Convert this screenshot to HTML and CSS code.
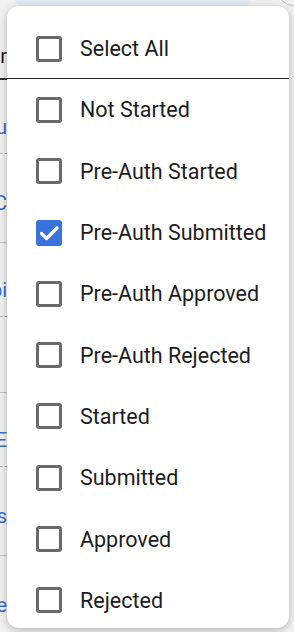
FILE: index.html
```html
<!DOCTYPE html>
<html lang="en">
<head>
    <meta charset="UTF-8">
    <meta name="viewport" content="width=device-width, initial-scale=1.0">
    <title>Status filter</title>
    <link rel="stylesheet" href="styles.css">
</head>
<body>
    <div class="page">
        <div class="top_bar">
            <span class="search_pill"></span>
            <span class="round_btn"></span>
        </div>
        <div class="table">
            <div class="head"><span class="cell">Order</span></div>
            <div class="group">
                <div class="line"><span class="cell link">Lu</span></div>
                <div class="line"><span class="cell link">RC</span></div>
            </div>
            <div class="group tall">
                <div class="line"><span class="cell link">Api</span></div>
                <div class="line empty"></div>
            </div>
            <div class="group">
                <div class="line"><span class="cell link">BE</span></div>
                <div class="line"><span class="cell link">Us</span></div>
            </div>
            <div class="group">
                <div class="line"><span class="cell link">Use</span></div>
            </div>
        </div>
    </div>

    <!-- 状态筛选菜单 -->
    <div class="menu">
        <label class="option">
            <span class="box"></span>
            <span class="text">Select All</span>
        </label>
        <div class="divider"></div>
        <div class="list">
            <label class="option"><span class="box"></span><span class="text">Not Started</span></label>
            <label class="option"><span class="box"></span><span class="text">Pre-Auth Started</span></label>
            <label class="option">
                <span class="box checked">
                    <svg viewBox="0 0 24 24" width="24" height="24"><path d="M4.5 12.5l5 5L20 7" fill="none" stroke="#fff" stroke-width="3.2" stroke-linecap="round" stroke-linejoin="round"/></svg>
                </span>
                <span class="text">Pre-Auth Submitted</span>
            </label>
            <label class="option"><span class="box"></span><span class="text">Pre-Auth Approved</span></label>
            <label class="option"><span class="box"></span><span class="text">Pre-Auth Rejected</span></label>
            <label class="option"><span class="box"></span><span class="text">Started</span></label>
            <label class="option"><span class="box"></span><span class="text">Submitted</span></label>
            <label class="option"><span class="box"></span><span class="text">Approved</span></label>
            <label class="option"><span class="box"></span><span class="text">Rejected</span></label>
        </div>
    </div>
</body>
</html>
```

FILE: styles.css
```css
*{
    margin: 0;
    padding: 0;
    box-sizing: border-box;
}

body{
    width: 294px;
    height: 632px;
    overflow: hidden;
    background-color: #f4f4f4;
    font-family: Roboto, "Noto Sans", sans-serif;
}

.page{
    width: 294px;
    height: 632px;
    background-color: #f2f2f2;
}

.top_bar{
    display: flex;
    justify-content: space-between;
    height: 6px;
    overflow: hidden;
}

.top_bar .search_pill{
    display: block;
    width: 236px;
    height: 6px;
    margin-left: 15px;
    background-color: #e3e9f4;
    border-radius: 0 0 12px 12px;
}

.top_bar .round_btn{
    display: block;
    width: 30px;
    height: 30px;
    margin-top: -24px;
    margin-right: -14px;
    border: 1px solid #b8b8b8;
    border-radius: 50%;
}

.table{
    width: 7px;
    overflow: hidden;
}

.table .cell{
    display: flex;
    justify-content: flex-end;
    width: 7px;
    font-size: 20px;
    white-space: nowrap;
}

.table .head{
    display: flex;
    align-items: center;
    height: 74px;
    padding-top: 28px;
    color: #111;
    border-bottom: 2px solid #333;
}

.table .group{
    border-bottom: 1px solid #c4c4c4;
}

.table .line{
    display: flex;
    align-items: center;
    height: 74px;
    padding-top: 20px;
    border-bottom: 1px dashed #b0b0b0;
}

.table .group .line:last-child{
    border-bottom: none;
    height: 88px;
    padding-top: 10px;
}

.table .group.tall .line.empty{
    height: 75px;
}

.table .link{
    color: #3b6fd4;
}

.menu{
    position: absolute;
    left: 7px;
    top: 6px;
    width: 282px;
    height: 622px;
    padding-top: 12px;
    background-color: #fff;
    border-radius: 12px;
    box-shadow: 0 2px 8px rgba(0, 0, 0, 0.28);
    overflow: hidden;
}

.menu .divider{
    height: 1px;
    margin-top: -1px;
    background-color: #222;
}

.option{
    display: flex;
    align-items: center;
    height: 61.3px;
    padding-left: 29px;
    cursor: pointer;
}

.option .box{
    display: flex;
    align-items: center;
    justify-content: center;
    width: 26px;
    height: 26px;
    border: 3px solid #6a6a6a;
    border-radius: 3px;
    flex-shrink: 0;
}

.option .box.checked{
    background-color: #3a72de;
    border-color: #3a72de;
}

.option .box svg{
    flex-shrink: 0;
}

.option .text{
    margin-left: 18px;
    font-size: 21.5px;
    color: #1c1c1c;
}
```
